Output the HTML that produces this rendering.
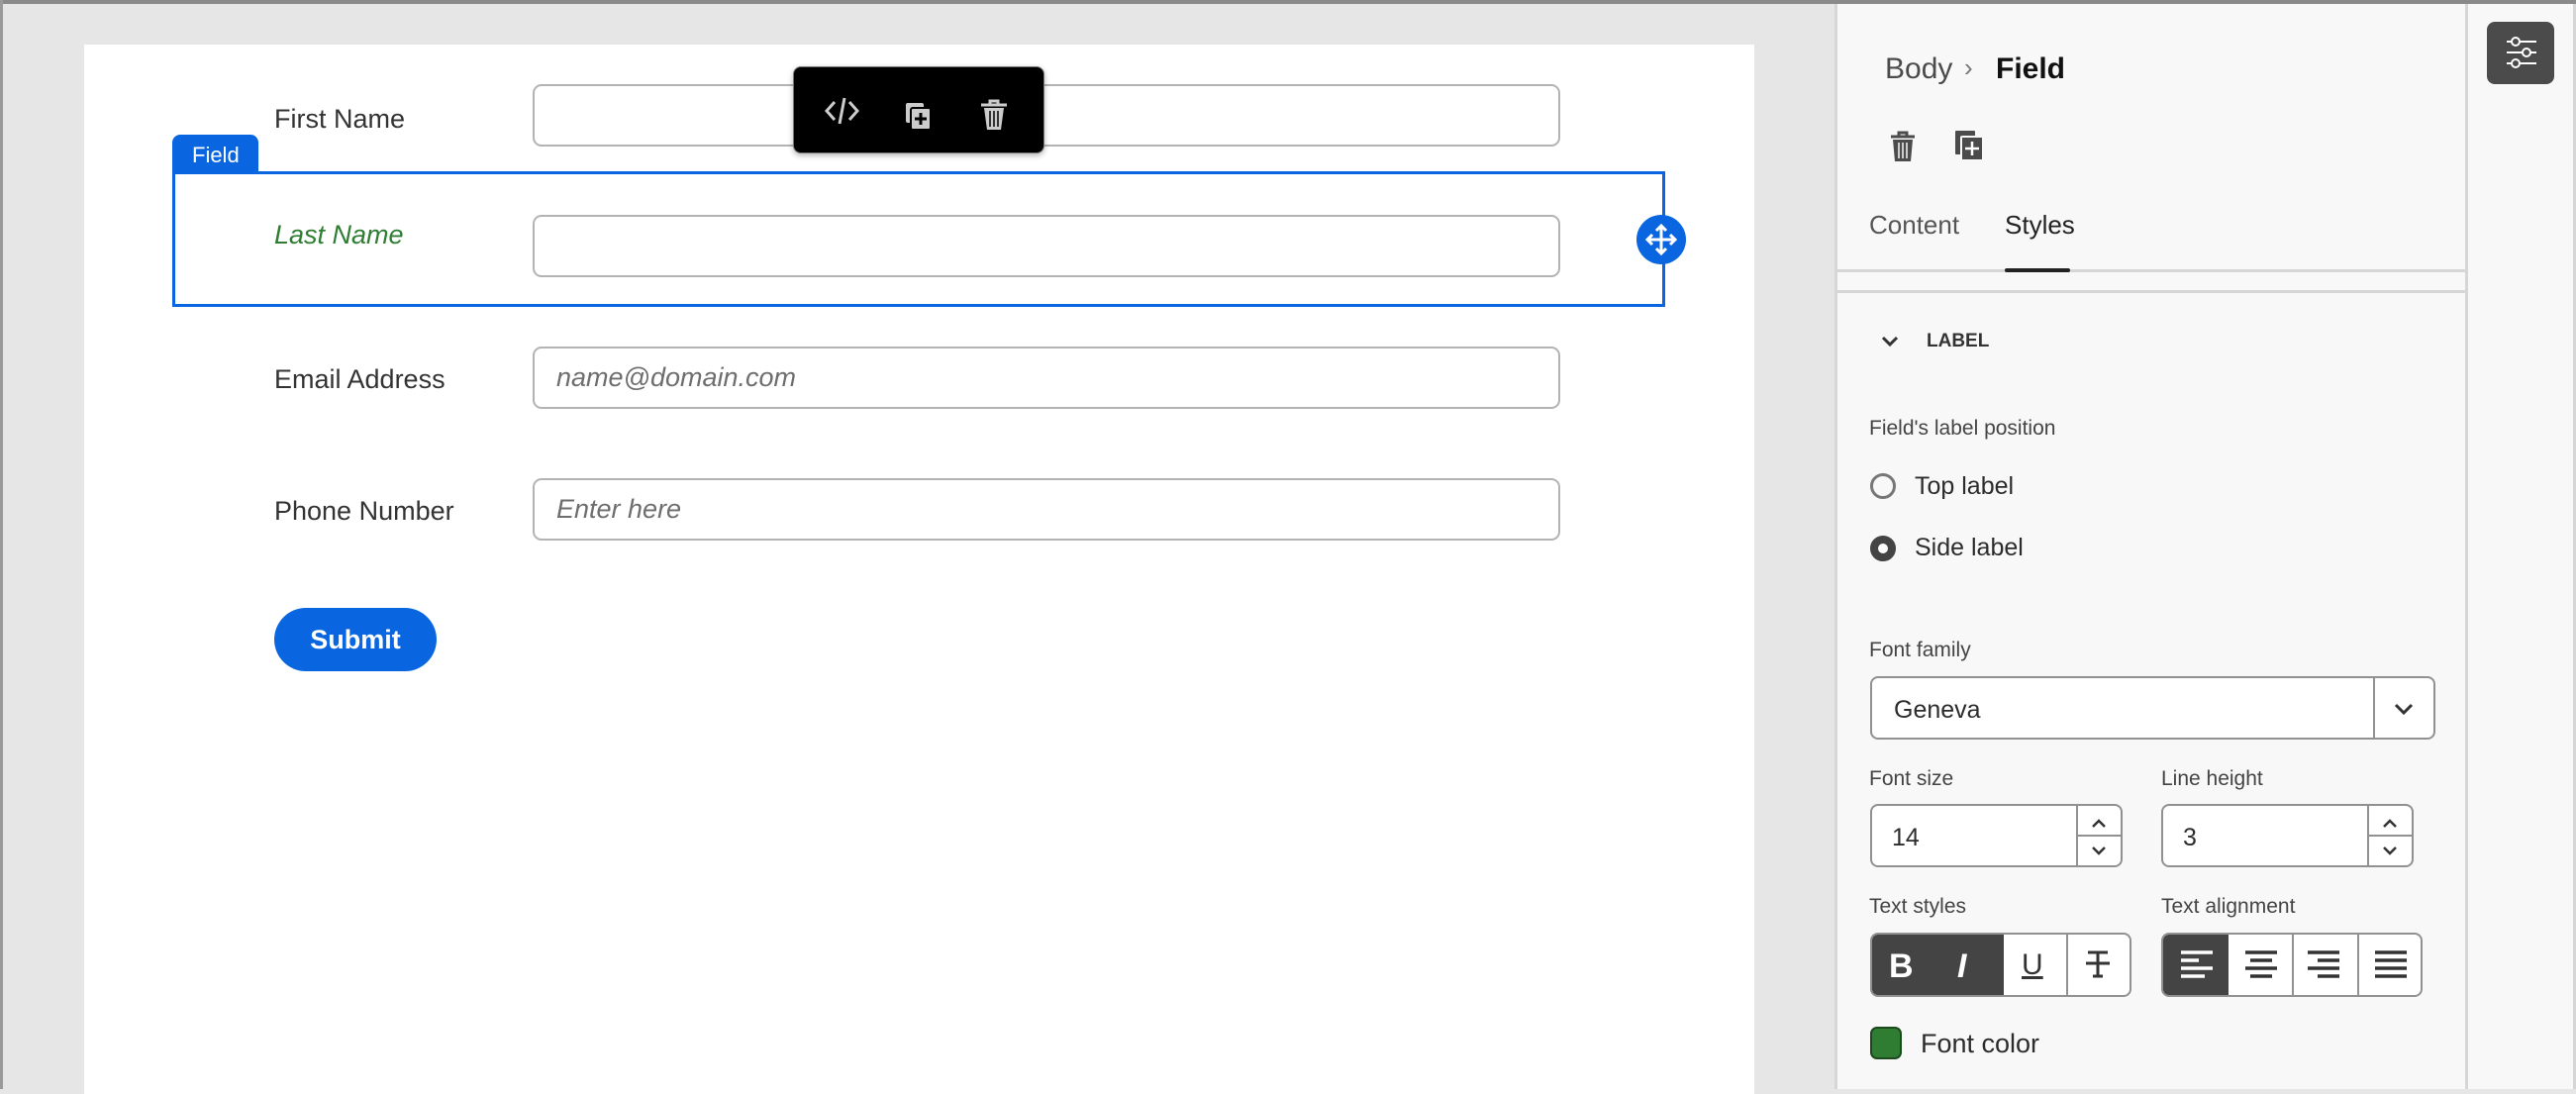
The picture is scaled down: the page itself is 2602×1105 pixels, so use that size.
<!DOCTYPE html>
<html><head><meta charset="utf-8"><style>
*{box-sizing:border-box;margin:0;padding:0}
body{width:2602px;height:1100px;overflow:hidden;background:#e6e6e6;font-family:"Liberation Sans",sans-serif;position:relative}
.a{position:absolute}
.lbl{position:absolute;left:277px;font-size:27px;color:#333;line-height:1}
.inp{position:absolute;left:538px;width:1038px;height:63px;border:2px solid #b3b3b3;border-radius:9px;background:#fff}
.ph{position:absolute;left:22px;top:14px;font-size:27px;font-style:italic;color:#6e6e6e}
.p{color:#2c2c2c;font-size:22px;position:absolute}
.box{position:absolute;border:2px solid #919191;border-radius:8px;background:#fff}
</style></head><body>
<div class="a" style="left:0;top:0;width:2602px;height:4px;background:#8a8a8a"></div>
<div class="a" style="left:0;top:0;width:3px;height:1100px;background:#9a9a9a"></div>
<div class="a" style="left:85px;top:45px;width:1687px;height:1060px;background:#fff"></div>

<div class="lbl" style="top:107px">First Name</div>
<div class="inp" style="top:85px"></div>

<div class="a" style="left:174px;top:136px;width:87px;height:40px;background:#0a66e0;border-radius:8px 8px 0 0;color:#fff;font-size:22px;padding:8px 0 0 20px">Field</div>
<div class="a" style="left:174px;top:173px;width:1508px;height:137px;border:3px solid #0a66e0"></div>
<div class="lbl" style="top:224px;color:#2e7d32;font-style:italic">Last Name</div>
<div class="inp" style="top:217px"></div>
<div class="a" style="left:1653px;top:217px;width:50px;height:50px;border-radius:50%;background:#0a66e0">
<svg width="50" height="50" viewBox="0 0 50 50" fill="none" stroke="#fff" stroke-width="3"><path d="M25 11v28M11 25h28M20 16l5-5 5 5M20 34l5 5 5-5M16 20l-5 5 5 5M34 20l5 5-5 5"/></svg></div>

<div class="a" style="left:801px;top:67px;width:254px;height:88px;background:#000;border-radius:8px;border:1px solid #777;box-shadow:0 2px 6px rgba(0,0,0,.3)">
<svg width="254" height="88" viewBox="0 0 254 88" fill="none" stroke="#ccc" stroke-width="3">
<path d="M41 35l-8 9 8 9M56 35l8 9-8 9M51 31l-5 26"/>
<rect x="113" y="36" width="18" height="20" rx="2" fill="#ccc" stroke="none"/>
<rect x="118" y="41" width="20" height="22" rx="2" fill="#ccc" stroke="#000" stroke-width="2"/>
<path d="M128 46v12M122 52h12" stroke="#000"/>
<path d="M189 38h26M198 38v-4h8v4" /><path d="M192 41l3 22h14l3-22z" fill="#ccc" stroke="none"/><path d="M198 44v16M202 44v16M206 44v16" stroke="#000" stroke-width="1.5"/>
</svg></div>

<div class="lbl" style="top:370px">Email Address</div>
<div class="inp" style="top:350px"><div class="ph">name@domain.com</div></div>
<div class="lbl" style="top:503px">Phone Number</div>
<div class="inp" style="top:483px"><div class="ph">Enter here</div></div>
<div class="a" style="left:277px;top:614px;width:164px;height:64px;border-radius:32px;background:#0a66e0;color:#fff;font-weight:bold;font-size:27px;text-align:center;line-height:64px">Submit</div>

<!-- panel -->
<div class="a" style="left:1853px;top:4px;width:640px;height:1096px;background:#f8f8f8;border-left:3px solid #d6d6d6;border-right:3px solid #d6d6d6"></div>
<div class="a" style="left:2493px;top:4px;width:109px;height:1096px;background:#f8f8f8;border-right:3px solid #d6d6d6"></div>
<div class="a" style="left:2512px;top:22px;width:68px;height:63px;background:#4b4b4b;border-radius:8px">
<svg width="68" height="63" viewBox="0 0 68 63" fill="none" stroke="#fff" stroke-width="2"><path d="M20 20h30M20 31h30M20 42h30"/><circle cx="29" cy="20" r="4" fill="#4b4b4b"/><circle cx="40" cy="31" r="4" fill="#4b4b4b"/><circle cx="29" cy="42" r="4" fill="#4b4b4b"/></svg></div>

<div class="a" style="left:1904px;top:53px;font-size:30px;color:#4b4b4b">Body</div>
<div class="a" style="left:1984px;top:53px;font-size:26px;color:#777">›</div>
<div class="a" style="left:2016px;top:53px;font-size:30px;color:#111;font-weight:bold">Field</div>
<svg class="a" style="left:1905px;top:130px" width="36" height="36" viewBox="0 0 36 36"><path d="M5 8h24M13 8V4h8v4" stroke="#4b4b4b" stroke-width="3" fill="none"/><path d="M7 11l2 22h16l2-22z" fill="#4b4b4b"/><path d="M13 14v16M17 14v16M21 14v16" stroke="#f8f8f8" stroke-width="1.5"/></svg>
<svg class="a" style="left:1972px;top:130px" width="36" height="36" viewBox="0 0 36 36"><rect x="3" y="2" width="20" height="24" rx="1" fill="#4b4b4b"/><rect x="9" y="8" width="22" height="24" rx="1" fill="#4b4b4b" stroke="#f8f8f8" stroke-width="2"/><path d="M20 13v14M13 20h14" stroke="#fff" stroke-width="2.5"/></svg>

<div class="a" style="left:1888px;top:212px;font-size:26px;color:#555">Content</div>
<div class="a" style="left:2025px;top:212px;font-size:26px;color:#222">Styles</div>
<div class="a" style="left:1856px;top:272px;width:634px;height:3px;background:#d6d6d6"></div>
<div class="a" style="left:2025px;top:271px;width:66px;height:4px;background:#222;border-radius:2px"></div>
<div class="a" style="left:1856px;top:293px;width:634px;height:3px;background:#d6d6d6"></div>

<svg class="a" style="left:1898px;top:335px" width="22" height="20" viewBox="0 0 22 20"><path d="M4 6l7 7 7-7" stroke="#333" stroke-width="3" fill="none"/></svg>
<div class="a" style="left:1946px;top:334px;font-size:19px;font-weight:bold;color:#333">LABEL</div>
<div class="p" style="left:1888px;top:421px;color:#444;font-size:21px">Field's label position</div>
<div class="a" style="left:1889px;top:478px;width:26px;height:26px;border-radius:50%;border:3px solid #777"></div>
<div class="p" style="left:1934px;top:477px;font-size:25px">Top label</div>
<div class="a" style="left:1889px;top:541px;width:26px;height:26px;border-radius:50%;border:8px solid #444;background:#fff"></div>
<div class="p" style="left:1934px;top:539px;font-size:25px">Side label</div>

<div class="p" style="left:1888px;top:645px;font-size:21px;color:#444">Font family</div>
<div class="box" style="left:1889px;top:683px;width:571px;height:64px"><div class="p" style="left:22px;top:18px;font-size:25px">Geneva</div>
<div class="a" style="left:506px;top:0;width:2px;height:60px;background:#919191"></div>
<svg class="a" style="left:524px;top:20px" width="26" height="22"><path d="M5 7l8 8 8-8" stroke="#333" stroke-width="3" fill="none"/></svg></div>

<div class="p" style="left:1888px;top:775px;font-size:21px;color:#444">Font size</div>
<div class="p" style="left:2183px;top:775px;font-size:21px;color:#444">Line height</div>
<div class="box" style="left:1889px;top:812px;width:255px;height:64px"><div class="p" style="left:20px;top:18px;font-size:25px">14</div>
<div class="a" style="left:206px;top:0;width:2px;height:60px;background:#919191"></div><div class="a" style="left:206px;top:29px;width:45px;height:2px;background:#919191"></div>
<svg class="a" style="left:218px;top:6px" width="22" height="50"><path d="M5 15l6-6 6 6M5 36l6 6 6-6" stroke="#333" stroke-width="2.5" fill="none"/></svg></div>
<div class="box" style="left:2183px;top:812px;width:255px;height:64px"><div class="p" style="left:20px;top:18px;font-size:25px">3</div>
<div class="a" style="left:206px;top:0;width:2px;height:60px;background:#919191"></div><div class="a" style="left:206px;top:29px;width:45px;height:2px;background:#919191"></div>
<svg class="a" style="left:218px;top:6px" width="22" height="50"><path d="M5 15l6-6 6 6M5 36l6 6 6-6" stroke="#333" stroke-width="2.5" fill="none"/></svg></div>

<div class="p" style="left:1888px;top:904px;font-size:21px;color:#444">Text styles</div>
<div class="p" style="left:2183px;top:904px;font-size:21px;color:#444">Text alignment</div>
<div class="box" style="left:1889px;top:942px;width:264px;height:65px;overflow:hidden">
<div class="a" style="left:0;top:0;width:133px;height:61px;background:#444"></div>
<div class="a" style="left:196px;top:0;width:2px;height:61px;background:#919191"></div>
<div class="a" style="left:17px;top:13px;font-size:34px;font-weight:bold;color:#fff">B</div>
<div class="a" style="left:86px;top:13px;font-size:34px;font-style:italic;font-weight:bold;color:#fff">I</div>
<div class="a" style="left:151px;top:14px;font-size:30px;text-decoration:underline;color:#333">U</div>
<svg class="a" style="left:212px;top:14px" width="34" height="34"><path d="M6 4h20M16 4v24M11 28h10M4 15h24" stroke="#333" stroke-width="3" fill="none"/></svg>
</div>
<div class="box" style="left:2183px;top:942px;width:264px;height:65px;overflow:hidden">
<div class="a" style="left:0;top:0;width:66px;height:61px;background:#444"></div>
<div class="a" style="left:130px;top:0;width:2px;height:61px;background:#919191"></div>
<div class="a" style="left:196px;top:0;width:2px;height:61px;background:#919191"></div>
<svg class="a" style="left:0;top:0" width="262" height="61" fill="none" stroke-width="3.5">
<path d="M18 18h32M18 26h18M18 34h32M18 42h24" stroke="#fff"/>
<path d="M83 18h32M88 26h22M83 34h32M88 42h22" stroke="#333"/>
<path d="M146 18h32M156 26h22M146 34h32M156 42h22" stroke="#333"/>
<path d="M214 18h32M214 26h32M214 34h32M214 42h32" stroke="#333"/>
</svg></div>

<div class="a" style="left:1889px;top:1037px;width:32px;height:33px;border-radius:7px;background:#2e7d32;border:2px solid #1c4a1e"></div>
<div class="p" style="left:1940px;top:1039px;font-size:27px">Font color</div>
</body></html>
